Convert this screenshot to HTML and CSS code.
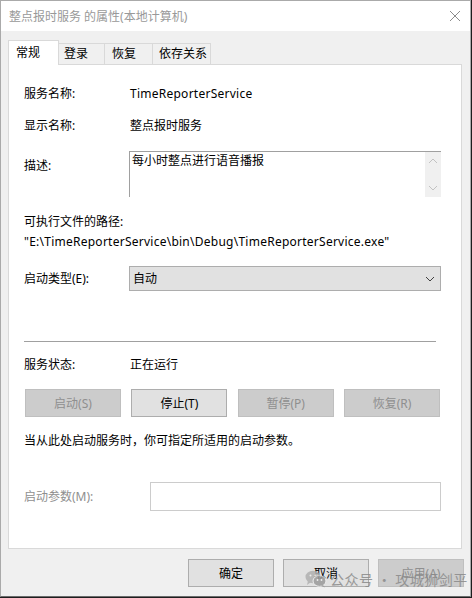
FILE: index.html
```html
<!DOCTYPE html>
<html lang="zh-CN">
<head>
    <meta charset="UTF-8">
    <meta name="viewport" content="width=device-width, initial-scale=1.0">
    <title>整点报时服务 的属性(本地计算机)</title>
    <link rel="stylesheet" href="styles.css">
</head>
<body>
    <div class="window">
        <div class="titlebar">
            <span class="title">整点报时服务 的属性(本地计算机)</span>
            <svg class="close" width="12" height="12" viewBox="0 0 12 12">
                <path d="M1 1 L11 11 M11 1 L1 11" stroke="#8c8c8c" stroke-width="1" fill="none"/>
            </svg>
        </div>

        <div class="client">
            <div class="tabs">
                <div class="tab active t1">常规</div>
                <div class="tab t2">登录</div>
                <div class="tab t3">恢复</div>
                <div class="tab t4">依存关系</div>
            </div>

            <div class="panel">
                <div class="row row-name">
                    <span class="label">服务名称:</span>
                    <span class="value latin">TimeReporterService</span>
                </div>

                <div class="row row-display">
                    <span class="label">显示名称:</span>
                    <span class="value">整点报时服务</span>
                </div>

                <div class="row row-desc">
                    <span class="label">描述:</span>
                    <div class="desc-box">
                        <div class="desc-text">每小时整点进行语音播报</div>
                        <div class="scrollbar">
                            <svg width="10" height="6" viewBox="0 0 10 6"><path d="M1 5 L5 1 L9 5" stroke="#c2c2c2" fill="none"/></svg>
                            <svg width="10" height="6" viewBox="0 0 10 6"><path d="M1 1 L5 5 L9 1" stroke="#c2c2c2" fill="none"/></svg>
                        </div>
                    </div>
                </div>

                <div class="path-label">可执行文件的路径:</div>
                <div class="path latin">"E:\TimeReporterService\bin\Debug\TimeReporterService.exe"</div>

                <div class="row row-type">
                    <span class="label">启动类型(E):</span>
                    <div class="combo">
                        <span>自动</span>
                        <svg width="10" height="6" viewBox="0 0 10 6"><path d="M1 1 L5 5 L9 1" stroke="#404040" fill="none"/></svg>
                    </div>
                </div>

                <div class="separator"></div>

                <div class="row row-status">
                    <span class="label">服务状态:</span>
                    <span class="value">正在运行</span>
                </div>

                <div class="service-buttons">
                    <button class="btn" disabled>启动(S)</button>
                    <button class="btn">停止(T)</button>
                    <button class="btn" disabled>暂停(P)</button>
                    <button class="btn" disabled>恢复(R)</button>
                </div>

                <div class="note">当从此处启动服务时，你可指定所适用的启动参数。</div>

                <div class="row row-param">
                    <span class="label muted">启动参数(M):</span>
                    <div class="param-input"></div>
                </div>
            </div>

            <div class="footer">
                <button class="btn">确定</button>
                <button class="btn">取消</button>
                <button class="btn" disabled>应用(A)</button>
            </div>
        </div>

        <!-- watermark lies over the footer -->
        <div class="watermark">
            <svg width="22" height="18" viewBox="0 0 22 18">
                <ellipse cx="8" cy="7" rx="7.5" ry="6.2" fill="#b0b0b0"/>
                <path d="M3 11 L2 15 L6 12 Z" fill="#b0b0b0"/>
                <ellipse cx="14.5" cy="11" rx="6.5" ry="5.4" fill="#9a9a9a" stroke="#f0f0f0" stroke-width="1"/>
                <path d="M18 15 L20 17.5 L16 15.5 Z" fill="#9a9a9a"/>
                <circle cx="5.5" cy="5.5" r="1" fill="#f0f0f0"/>
                <circle cx="10.5" cy="5.5" r="1" fill="#f0f0f0"/>
                <circle cx="12.5" cy="10" r="0.9" fill="#f0f0f0"/>
                <circle cx="16.5" cy="10" r="0.9" fill="#f0f0f0"/>
            </svg>
            <span>公众号 · 攻城狮剑平</span>
        </div>
    </div>
</body>
</html>
```

FILE: styles.css
```css
/* Windows service properties dialog */
* {
    margin: 0;
    padding: 0;
    box-sizing: border-box;
}

body {
    background: #1e1e1e;
    width: 472px;
    height: 598px;
    overflow: hidden;
    font-family: "Noto Sans", "Noto Sans CJK SC", sans-serif;
    font-size: 12px;
    color: #000;
}

.window {
    position: relative;
    width: 471px;
    height: 597px;
    background: #f0f0f0;
    border: 1px solid #aaaaaa;
    border-bottom-color: #6b6b6b;
}

.titlebar {
    height: 30px;
    background: #fff;
    display: flex;
    align-items: center;
    justify-content: space-between;
    padding: 0 9px 0 8px;
}

.title {
    color: #999;
    font-size: 12px;
}

.close {
    display: block;
}

.client {
    padding-top: 9px;
}

/* Tabs */
.tabs {
    display: flex;
    align-items: flex-end;
    height: 24px;
    margin-left: 7px;
}

.tab {
    height: 21px;
    line-height: 20px;
    border: 1px solid #d9d9d9;
    border-bottom: none;
    border-left: none;
    background: #f0f0f0;
}

    .tab.active {
        position: relative;
        z-index: 1;
        height: 25px;
        margin-bottom: -1px;
        line-height: 23px;
        background: #fff;
        border-left: 1px solid #d9d9d9;
    }

.t1 { width: 51px; padding-left: 7px; }
.t2 { width: 46px; padding-left: 5px; }
.t3 { width: 48px; padding-left: 7px; }
.t4 { width: 58px; padding-left: 6px; }

/* Panel */
.panel {
    margin: 0 7px;
    width: 454px;
    height: 485px;
    background: #fff;
    border: 1px solid #d9d9d9;
    padding: 20px 0 0 15px;
}

.row {
    display: grid;
    grid-template-columns: 105px 312px;
    align-items: center;
    line-height: 16px;
}

.value {
    padding-left: 1px;
}

.latin {
    letter-spacing: 0.25px;
}

.row-name {
    padding-top: 1px;
}

.row-display {
    margin-top: 16px;
}

.row-desc {
    margin-top: 17px;
    align-items: start;
}

    .row-desc .label {
        padding-top: 7px;
    }

.desc-box {
    height: 46px;
    display: flex;
    border-top: 1px solid #a0a0a0;
    border-left: 1px solid #a0a0a0;
}

.desc-text {
    flex: 1;
    padding: 1px 0 0 2px;
}

.scrollbar {
    width: 16px;
    background: #f0f0f0;
    display: flex;
    flex-direction: column;
    justify-content: space-between;
    align-items: center;
    padding: 6px 0 6px;
}

    .scrollbar svg {
        display: block;
    }

.path-label {
    margin-top: 17px;
    line-height: 16px;
}

.path {
    margin-top: 4px;
    line-height: 16px;
}

.row-type {
    margin-top: 16px;
}

.combo {
    height: 25px;
    background: #e1e1e1;
    border: 1px solid #adadad;
    display: flex;
    align-items: center;
    justify-content: space-between;
    padding: 0 5px 0 3px;
}

    .combo svg {
        display: block;
    }

.separator {
    margin-top: 50px;
    width: 412px;
    height: 1px;
    background: #a0a0a0;
}

.row-status {
    margin-top: 15px;
}

/* Buttons */
.btn {
    height: 28px;
    font-family: inherit;
    font-size: 12px;
    color: #000;
    background: #e1e1e1;
    border: 1px solid #adadad;
}

    .btn:disabled {
        background: #cccccc;
        border-color: #bfbfbf;
        color: #8f8f8f;
    }

.service-buttons {
    margin-top: 16px;
    margin-left: 1px;
    width: 415px;
    display: flex;
    justify-content: space-between;
}

    .service-buttons .btn {
        width: 96px;
    }

.note {
    margin-top: 16px;
    line-height: 16px;
}

.row-param {
    margin-top: 33px;
    grid-template-columns: 126px 291px;
}

.muted {
    color: #8f8f8f;
}

.param-input {
    height: 29px;
    border: 1px solid #cccccc;
}

.footer {
    display: flex;
    justify-content: flex-end;
    gap: 9px;
    margin-top: 10px;
    padding-right: 6px;
}

    .footer .btn {
        width: 86px;
    }

/* Watermark */
.watermark {
    position: absolute;
    left: 304px;
    top: 568px;
    display: flex;
    align-items: center;
    gap: 3px;
    color: #8a8a8a;
    font-family: "Noto Sans CJK SC", sans-serif;
    font-size: 14px;
    letter-spacing: 0.5px;
    opacity: 0.85;
}

    .watermark svg {
        display: block;
    }
```
